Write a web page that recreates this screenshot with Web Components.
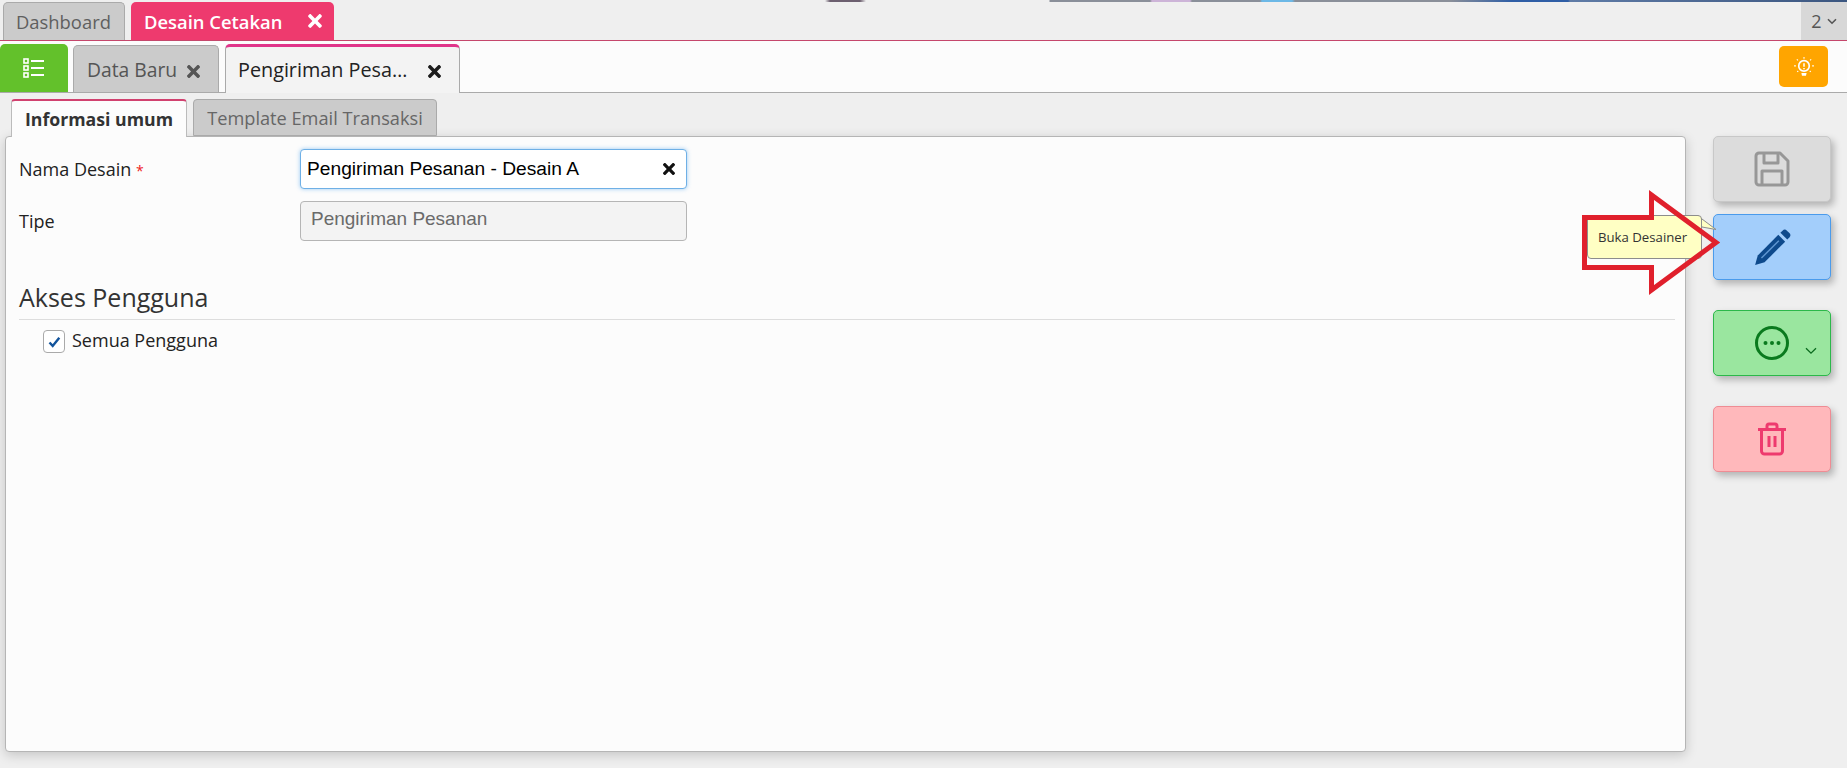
<!DOCTYPE html>
<html>
<head>
<meta charset="utf-8">
<title>Desain Cetakan</title>
<style>
  html, body { margin: 0; padding: 0; }
  body {
    width: 1847px;
    height: 768px;
    overflow: hidden;
    background: #efefef;
    font-family: "Open Sans", "Noto Sans", sans-serif;
    color: #222;
    position: relative;
  }
</style>
</head>
<body>
<template id="close-icon"><svg viewBox="0 0 352 512" width="100%" height="100%" fill="currentColor"><path d="M242.7 256l100.1-100.1c12.3-12.3 12.3-32.2 0-44.5l-22.2-22.2c-12.3-12.3-32.2-12.3-44.5 0L176 189.3 75.9 89.2c-12.3-12.3-32.2-12.3-44.5 0L9.2 111.4c-12.3 12.3-12.3 32.2 0 44.5L109.3 256 9.2 356.1c-12.3 12.3-12.3 32.2 0 44.5l22.2 22.2c12.3 12.3 32.2 12.3 44.5 0L176 322.7l100.1 100.1c12.3 12.3 32.2 12.3 44.5 0l22.2-22.2c12.3-12.3 12.3-32.2 0-44.5L242.7 256z"/></svg></template>

<top-bar>
  <page-tab kind="top">Dashboard</page-tab>
  <page-tab kind="top-active" closable>Desain Cetakan</page-tab>
</top-bar>

<sub-bar>
  <page-tab kind="sub" closable style="margin-left:5px">Data Baru</page-tab>
  <page-tab kind="sub-active" closable>Pengiriman Pesa…</page-tab>
</sub-bar>

<main-area>
  <detail-panel></detail-panel>
  <action-column></action-column>
</main-area>

<arrow-callout></arrow-callout>

<script>
const closeIcon = () => document.getElementById("close-icon").innerHTML;

class TopBar extends HTMLElement {
  constructor() {
    super();
    this.attachShadow({ mode: "open" });
    this.shadowRoot.innerHTML = `
      <style>
        :host { display: block; height: 41px; box-sizing: border-box; border-bottom: 1px solid #c5476c; position: relative; }
        /* sliver of the window behind, visible along the very top */
        .strip { height: 2px; background: linear-gradient(90deg,
          transparent 825px, #6d6070 830px, #6d6070 860px, transparent 866px,
          transparent 1049px, #8a8f99 1050px, #8a8f99 1150px, #cdb4d8 1152px, #cdb4d8 1190px, #8a8f99 1192px,
          #8a8f99 1260px, #6cb8e6 1262px, #6cb8e6 1292px, #8a8f99 1295px,
          #8a8f99 1450px, #2f5ea6 1512px, #2f5ea6 1568px, #5f7ba6 1570px, #3b5680 1847px); }
        .row { display: flex; align-items: flex-end; height: 38px; padding-left: 3px; gap: 6px; }
        .count { margin-left: auto; width: 46px; height: 38px; background: #d8d8d8; color: #555; font-size: 18px; display: flex; align-items: center; justify-content: center; gap: 5px; }
      </style>
      <div class="strip"></div>
      <div class="row">
        <slot></slot>
        <div class="count">2<svg width="10" height="7" viewBox="0 0 10 7" fill="none" stroke="#555" stroke-width="1.6"><path d="M1 1.2l4 4 4-4"/></svg></div>
      </div>`;
  }
}

class SubBar extends HTMLElement {
  constructor() {
    super();
    this.attachShadow({ mode: "open" });
    this.shadowRoot.innerHTML = `
      <style>
        :host { display: flex; height: 52px; box-sizing: border-box; background: #fcfcfc; border-bottom: 1px solid #aaa; align-items: flex-end; }
        .menu { width: 68px; height: 48px; background: #63c12b; border-radius: 5px 5px 0 0; display: flex; align-items: center; justify-content: center; }
        .tabs { display: flex; align-items: flex-end; gap: 6px; height: 48px; }
        .hint { margin: 5px 19px auto auto; width: 49px; height: 41px; background: #ffa500; border-radius: 5px; display: flex; align-items: center; justify-content: center; }
      </style>
      <div class="menu">
        <svg width="24" height="22" viewBox="0 0 24 22" fill="none" stroke="#fff">
          <rect x="2" y="2" width="4" height="4" stroke-width="1.6"/><rect x="2" y="9" width="4" height="4" stroke-width="1.6"/><rect x="2" y="16" width="4" height="4" stroke-width="1.6"/>
          <path d="M9 4h13M9 11h13M9 18h13" stroke-width="2"/>
        </svg>
      </div>
      <div class="tabs"><slot></slot></div>
      <div class="hint">
        <svg width="22" height="22" viewBox="0 0 20 20" fill="none" stroke="#fff">
          <circle cx="10" cy="9" r="4.8" stroke-width="1.5"/>
          <path d="M7.6 15.500h4.800l-.6 2.500H8.200z" fill="#fff" stroke="none"/>
          <path d="M10 6.500v3.200M10 10.800v1.200" stroke-width="1.4"/>
          <path d="M10 1v1.400M3.500 3l1 1M16.500 3l-1 1M1 9h1.600M17.400 9H19M3.800 14.400l1-.8M16.200 14.400l-1-.8" stroke-width="1"/>
        </svg>
      </div>`;
  }
}

class PageTab extends HTMLElement {
  constructor() {
    super();
    this.attachShadow({ mode: "open" });
  }
  connectedCallback() {
    const kind = this.getAttribute("kind");
    const close = this.hasAttribute("closable") ? `<span class="x">${closeIcon()}</span>` : "";
    this.shadowRoot.innerHTML = `
      <style>
        :host { display: flex; align-items: center; box-sizing: border-box; border-radius: 5px 5px 0 0; white-space: nowrap; }
        :host([kind="top"]) { width: 122px; height: 38px; padding-left: 12px; background: #cbcbcb; border: 1px solid #aaa; border-bottom: 0; color: #5f5f5f; font-size: 18.4px; }
        :host([kind="top-active"]) { width: 203px; height: 38px; padding-left: 13px; background: #ee3a6e; color: #fff; font-size: 18.4px; font-weight: 600; }
        :host([kind="top-active"]) .x { margin-left: 26px; width: 14px; height: 20px; }
        :host([kind="sub"]) { width: 146px; height: 47px; padding-left: 13px; background: #cbcbcb; border: 1px solid #aaa; border-bottom: 0; color: #555; font-size: 19.3px; }
        :host([kind="sub"]) .x { margin-left: 10px; width: 13px; height: 19px; }
        :host([kind="sub-active"]) { width: 235px; height: 49px; margin-bottom: -1px; padding: 0 0 2px 12px; background: #f3f3f3; border: 1px solid #aaa; border-top: 3px solid #e0358a; border-bottom: 0; color: #222; font-size: 19.800px; }
        :host([kind="sub-active"]) .x { margin-left: 21px; width: 13px; height: 19px; color: #1c1c1c; }
        .x { display: block; }
      </style>
      <slot></slot>${close}`;
  }
}

class MainArea extends HTMLElement {
  constructor() {
    super();
    this.attachShadow({ mode: "open" });
    this.shadowRoot.innerHTML = `
      <style>
        :host { display: flex; padding: 6px 16px 0 5px; gap: 27px; align-items: flex-start; }
      </style>
      <slot></slot>`;
  }
}

class DetailPanel extends HTMLElement {
  constructor() {
    super();
    this.attachShadow({ mode: "open" });
    this.shadowRoot.innerHTML = `
      <style>
        :host { display: block; width: 1681px; font-size: 18px; }
        .tabs { display: flex; gap: 6px; padding-left: 6px; height: 37px; align-items: flex-start; position: relative; z-index: 1; }
        .tab { box-sizing: border-box; height: 38px; display: flex; align-items: center; justify-content: center; border-radius: 4px 4px 0 0; white-space: nowrap; }
        .on { width: 176px; background: #fcfcfc; border: 1px solid #bbb; border-top: 2px solid #d1416f; border-bottom: 0; font-weight: 700; color: #333; font-size: 17.7px; }
        .off { width: 244px; height: 37px; background: #cbcbcb; border: 1px solid #aaa; color: #666; font-size: 18.2px; }
        .card { box-sizing: border-box; height: 616px; background: #fcfcfc; border: 1px solid #b5b5b5; border-radius: 4px; box-shadow: 0 3px 12px rgba(0,0,0,.18); padding: 12px 10px 0 13px; }
        .field { display: grid; grid-template-columns: 281px 387px; align-items: center; height: 40px; margin-bottom: 12px; }
        .req { color: #e22; font-size: 14px; }
        .input { box-sizing: border-box; height: 40px; border-radius: 4px; font: 19.2px "Liberation Sans", Arial, sans-serif; display: flex; align-items: center; padding-left: 6px; }
        .input.live { background: #fff; border: 1px solid #6fb0e6; box-shadow: 0 0 4px rgba(90,170,240,.6); color: #000; justify-content: space-between; padding-right: 11px; }
        .input.live span { width: 12px; height: 18px; display: block; color: #111; }
        .input.off-input { background: #f3f3f3; border: 1px solid #b5b5b5; color: #6a6a6a; padding-left: 10px; font-size: 19px; padding-bottom: 4px; }
        h2 { margin: 33px 0 0; font-size: 25px; font-weight: 400; color: #333; height: 45px; line-height: 47px; border-bottom: 1px solid #ddd; box-sizing: content-box; }
        .check { display: flex; align-items: center; gap: 7px; margin: 7px 0 0 24px; color: #222; }
        .box { box-sizing: border-box; width: 22px; height: 23px; background: #fff; border: 1px solid #aaa; border-radius: 4px; display: flex; align-items: center; justify-content: center; margin-top: 3px; }
      </style>
      <div class="tabs">
        <div class="tab on">Informasi umum</div>
        <div class="tab off">Template Email Transaksi</div>
      </div>
      <div class="card">
        <div class="field">
          <div>Nama Desain <span class="req">*</span></div>
          <div class="input live">Pengiriman Pesanan - Desain A<span>${closeIcon()}</span></div>
        </div>
        <div class="field">
          <div>Tipe</div>
          <div class="input off-input">Pengiriman Pesanan</div>
        </div>
        <h2>Akses Pengguna</h2>
        <div class="check">
          <div class="box"><svg width="13" height="12" viewBox="0 0 13 12" fill="none" stroke="#12549c" stroke-width="2.4"><path d="M1.500 6.500l3.200 3.400 6.600-8.200"/></svg></div>
          Semua Pengguna
        </div>
      </div>`;
  }
}

class ActionColumn extends HTMLElement {
  constructor() {
    super();
    this.attachShadow({ mode: "open" });
    this.shadowRoot.innerHTML = `
      <style>
        :host { display: flex; flex-direction: column; width: 118px; padding-top: 37px; }
        .btn { box-sizing: border-box; height: 66px; border-radius: 5px; border: 1px solid; display: flex; align-items: center; justify-content: center; box-shadow: 3px 4px 7px rgba(0,0,0,.25); position: relative; }
        .save { background: #dcdcdc; border-color: #c8c8c8; margin-bottom: 12px; }
        .edit { background: #a3cefb; border-color: #4a9bec; margin-bottom: 30px; }
        .more { background: #9ae69f; border-color: #2cb84a; margin-bottom: 30px; }
        .del { background: #ffb8bb; border-color: #ef8c94; }
        .chev { position: absolute; left: 91px; top: 36px; }
      </style>
      <div class="btn save">
        <svg width="38" height="38" viewBox="0 0 38 38" fill="none" stroke="#979797" stroke-width="3" stroke-linejoin="round"><path d="M3 6a3 3 0 0 1 3-3h21l8 8v21a3 3 0 0 1-3 3H6a3 3 0 0 1-3-3z"/><path d="M11 3v10h14V4M9 35V21h20v14"/></svg>
      </div>
      <div class="btn edit">
        <svg width="39" height="39" viewBox="0 0 37 37" fill="none" stroke="#0e4a8c"><path d="M2 35l2.500-9L24 6.500l6.500 6.500L11 32.500z" fill="#0e4a8c" stroke="none"/><path d="M26 4.500l2-2a3 3 0 0 1 4.200 0l2.300 2.300a3 3 0 0 1 0 4.200l-2 2z" fill="#0e4a8c" stroke="none"/><path d="M8 28.500L24.500 12" stroke="#5f96d0" stroke-width="1.400"/></svg>
      </div>
      <div class="btn more">
        <svg width="36" height="36" viewBox="0 0 36 36" fill="none" stroke="#0a7a1e" stroke-width="3"><circle cx="18" cy="18" r="15.500"/><g fill="#0a7a1e" stroke="none"><circle cx="11.500" cy="18" r="2"/><circle cx="18" cy="18" r="2"/><circle cx="24.500" cy="18" r="2"/></g></svg>
        <svg class="chev" width="12" height="8" viewBox="0 0 12 8" fill="none" stroke="#0a6a1e" stroke-width="1.300"><path d="M1 1.200l5 5 5-5"/></svg>
      </div>
      <div class="btn del">
        <svg width="30" height="34" viewBox="0 0 30 34" fill="none" stroke="#ee3a6e" stroke-width="3" stroke-linejoin="round"><path d="M1 7.500h28"/><path d="M10 7V4a2 2 0 0 1 2-2h6a2 2 0 0 1 2 2v3"/><path d="M4.500 8v21a3 3 0 0 0 3 3h15a3 3 0 0 0 3-3V8"/><path d="M12 14v11M18 14v11"/></svg>
      </div>`;
  }
}

// tooltip and the red annotation arrow sit over the panel
class ArrowCallout extends HTMLElement {
  constructor() {
    super();
    this.attachShadow({ mode: "open" });
    this.shadowRoot.innerHTML = `
      <style>
        :host { display: block; position: absolute; left: 1575px; top: 185px; width: 160px; height: 115px; }
        .tip { position: absolute; left: 12px; top: 30px; width: 115px; height: 44px; box-sizing: border-box; background: #ffffc4; border: 1px solid #8d8d8d; border-radius: 4px; font-size: 13.200px; color: #333; display: flex; align-items: center; padding-left: 10px; white-space: nowrap; }
        .ear { position: absolute; left: 120px; top: 30px; }
        svg.arrow { position: absolute; left: 0; top: 0; }
      </style>
      <svg class="ear" width="22" height="20" viewBox="0 0 22 20"><path d="M0 .5h3L7 4l14 10.500L7 12z" fill="#ffffc4" stroke="#8d8d8d"/></svg>
      <div class="tip">Buka Desainer</div>
      <svg class="arrow" width="160" height="115" viewBox="0 0 160 115" fill="none" stroke="#e0202c" stroke-width="5"><path d="M9.500 32.500H76.500V10L141 57.500 76.500 105V82.500H9.500z"/></svg>`;
  }
}

customElements.define("top-bar", TopBar);
customElements.define("sub-bar", SubBar);
customElements.define("page-tab", PageTab);
customElements.define("main-area", MainArea);
customElements.define("detail-panel", DetailPanel);
customElements.define("action-column", ActionColumn);
customElements.define("arrow-callout", ArrowCallout);
</script>
</body>
</html>
